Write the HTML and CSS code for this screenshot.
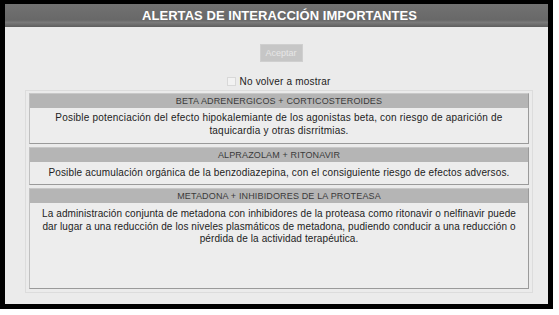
FILE: index.html
```html
<!DOCTYPE html>
<html lang="es">
<head>
<meta charset="utf-8">
<link rel="stylesheet" href="styles.css">
</head>
<body>
<div class="frame">
  <div class="title">ALERTAS DE INTERACCIÓN IMPORTANTES</div>
  <div class="content">
    <div class="actions">
      <button class="btn" disabled>Aceptar</button>
    </div>
    <label class="check"><span class="box"></span>No volver a mostrar</label>
    <div class="list">
      <div class="panel">
        <div class="phead">BETA ADRENERGICOS + CORTICOSTEROIDES</div>
        <div class="pbody p1">Posible potenciación del efecto hipokalemiante de los agonistas beta, con riesgo de aparición de taquicardia y otras disrritmias.</div>
      </div>
      <div class="panel">
        <div class="phead">ALPRAZOLAM + RITONAVIR</div>
        <div class="pbody p2">Posible acumulación orgánica de la benzodiazepina, con el consiguiente riesgo de efectos adversos.</div>
      </div>
      <div class="panel">
        <div class="phead">METADONA + INHIBIDORES DE LA PROTEASA</div>
        <div class="pbody p3">La administración conjunta de metadona con inhibidores de la proteasa como ritonavir o nelfinavir puede dar lugar a una reducción de los niveles plasmáticos de metadona, pudiendo conducir a una reducción o pérdida de la actividad terapéutica.</div>
      </div>
    </div>
  </div>
</div>
</body>
</html>
```

FILE: styles.css
```css
* { box-sizing: border-box; }
html, body { margin: 0; padding: 0; background: #ffffff; }
body { font-family: "Liberation Sans", Arial, sans-serif; width: 559px; height: 315px; overflow: hidden; }
.frame {
  width: 553px;
  height: 309px;
  border: 5px solid #000;
  border-top-width: 4px;
  background: #ebebeb;
  display: flex;
  flex-direction: column;
}
.title {
  height: 23px;
  background: linear-gradient(#727272, #686868 70%, #7a7a7a 80%, #5e5e5e);
  color: #fff;
  font-weight: bold;
  font-size: 13px;
  line-height: 23px;
  text-align: center;
  padding-left: 6px;
  letter-spacing: 0.05px;
}
.content {
  flex: 1;
  padding: 17px 15px 0 20px;
  display: flex;
  flex-direction: column;
}
.actions { display: flex; justify-content: center; padding-left: 4px; }
.btn {
  width: 43px;
  height: 18px;
  border: 1px solid #cfcfcf;
  background: #c6c6c6;
  color: #e6e6e6;
  font-family: "Liberation Sans", Arial, sans-serif;
  font-size: 9px;
  padding: 0;
}
.check {
  margin-top: 14px;
  display: flex;
  align-items: center;
  justify-content: center;
  padding-left: 0;
  font-size: 10px;
  letter-spacing: 0.2px;
  color: #222;
  height: 11px;
}
.box {
  width: 9px;
  height: 9px;
  border: 1px solid #d8d8d8;
  background: #f2f2f2;
  margin-right: 3px;
}
.list {
  margin-top: 3px;
  border: 1px solid #dcdcdc;
  padding: 2px 3px;
  display: flex;
  flex-direction: column;
  gap: 3px;
  height: 203px;
}
.panel {
  border: 1px solid #9a9a9a;
  border-top-color: #c8c8c8;
  border-left-color: #c0c0c0;
  background: #ededed;
  flex-shrink: 0;
}
.phead {
  height: 14px;
  background: #b5b5b5;
  color: #3a3a3a;
  font-size: 9px;
  letter-spacing: 0.15px;
  line-height: 14px;
  text-align: center;
}
.pbody {
  font-size: 10px;
  letter-spacing: 0.2px;
  line-height: 12.5px;
  color: #222;
  text-align: center;
  padding: 4px 20px 0;
  overflow: hidden;
}
.p1 { height: 35px; }
.p2 { height: 22px; padding: 5px 2px 0; letter-spacing: 0.15px; }
.p3 { height: 85px; padding: 5px 4px 0; letter-spacing: 0.1px; }
```
